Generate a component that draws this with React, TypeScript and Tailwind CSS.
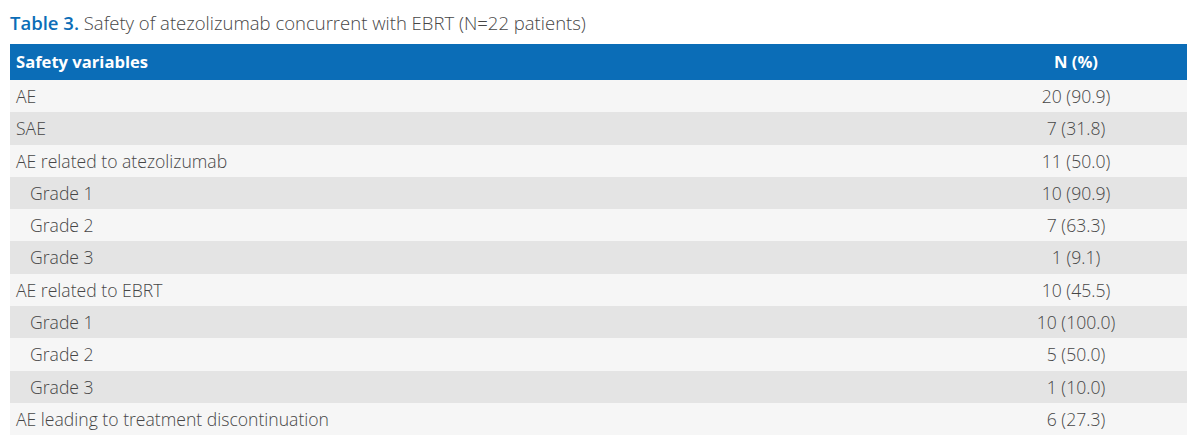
const rows: { label: string; value: string; indent?: boolean }[] = [
  { label: "AE", value: "20 (90.9)" },
  { label: "SAE", value: "7 (31.8)" },
  { label: "AE related to atezolizumab", value: "11 (50.0)" },
  { label: "Grade 1", value: "10 (90.9)", indent: true },
  { label: "Grade 2", value: "7 (63.3)", indent: true },
  { label: "Grade 3", value: "1 (9.1)", indent: true },
  { label: "AE related to EBRT", value: "10 (45.5)" },
  { label: "Grade 1", value: "10 (100.0)", indent: true },
  { label: "Grade 2", value: "5 (50.0)", indent: true },
  { label: "Grade 3", value: "1 (10.0)", indent: true },
  { label: "AE leading to treatment discontinuation", value: "6 (27.3)" },
]

const App = () => {
  return (
    <div className="h-[437px] w-[1200px] overflow-hidden bg-white font-['Open_Sans',sans-serif] text-[#464646]">
      <div className="flex flex-col px-[10px] pr-[13px]">
        <p className="h-[44px] pt-[11px] text-[18.5px] leading-[24px] font-light">
          <span className="font-semibold text-[#0b6db7]">Table 3.</span> Safety of atezolizumab concurrent with EBRT (N=22 patients)
        </p>

        <div className="grid h-[36px] grid-cols-[1fr_222px] items-center bg-[#0b6db7] text-[16.6px] font-bold text-white">
          <span className="pl-[6px]">Safety variables</span>
          <span className="text-center">N (%)</span>
        </div>

        <ul>
          {rows.map((row, i) => (
            <li
              key={i}
              className={`grid h-[32.3px] grid-cols-[1fr_222px] items-center text-[17.6px] font-light ${
                i % 2 === 0 ? "bg-[#f6f6f6]" : "bg-[#e4e4e4]"
              }`}
            >
              <span className={row.indent ? "pl-[20px]" : "pl-[6px]"}>{row.label}</span>
              <span className="text-center">{row.value}</span>
            </li>
          ))}
        </ul>
      </div>
    </div>
  )
}

export default App
